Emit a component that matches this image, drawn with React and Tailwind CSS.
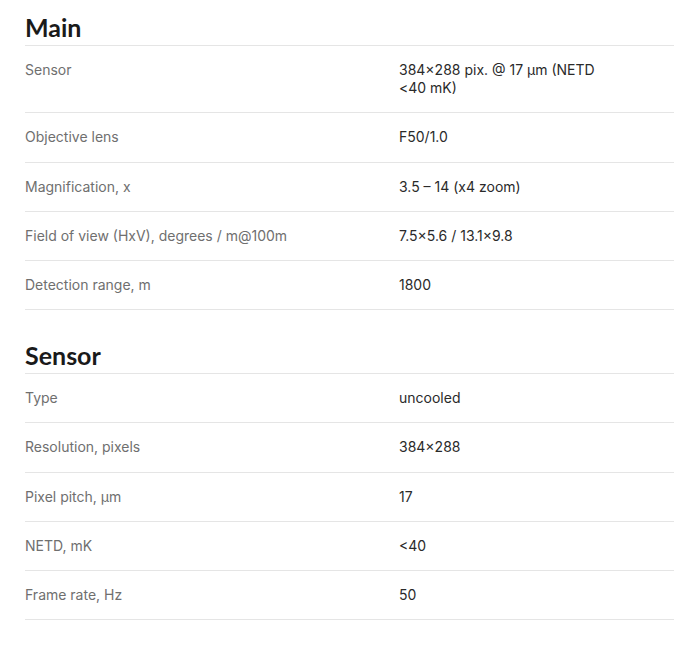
import React from 'react';

const sections = [
  {
    title: 'Main',
    rows: [
      ['Sensor', '384×288 pix. @ 17 µm (NETD <40 mK)'],
      ['Objective lens', 'F50/1.0'],
      ['Magnification, x', '3.5 – 14 (x4 zoom)'],
      ['Field of view (HxV), degrees / m@100m', '7.5×5.6 / 13.1×9.8'],
      ['Detection range, m', '1800'],
    ],
  },
  {
    title: 'Sensor',
    rows: [
      ['Type', 'uncooled'],
      ['Resolution, pixels', '384×288'],
      ['Pixel pitch, µm', '17'],
      ['NETD, mK', '<40'],
      ['Frame rate, Hz', '50'],
    ],
  },
];

const SpecRow = ({ label, value }) => (
  <div className="flex border-b border-[#e5e5e5] py-[15px] text-[14px] leading-[18.2px]">
    <div className="w-[374px] shrink-0 text-[#6f6f6f]">{label}</div>
    <div className="w-[212px] text-[#2a2a2a]">{value}</div>
  </div>
);

const App = () => {
  return (
    <div className="min-h-[646px] bg-white pl-[25px] font-['Inter',sans-serif]">
      {sections.map((s, i) => (
        <div key={s.title} className={i > 0 ? 'mt-[18px]' : ''}>
          <h2 className="border-b border-[#e5e5e5] pt-[13px] pb-[3px] font-['Lato',sans-serif] text-[25px] leading-[29px] font-bold text-[#1a1a1a]">
            {s.title}
          </h2>
          {s.rows.map(([label, value]) => (
            <SpecRow key={label} label={label} value={value} />
          ))}
        </div>
      ))}
    </div>
  );
};

export default App;
